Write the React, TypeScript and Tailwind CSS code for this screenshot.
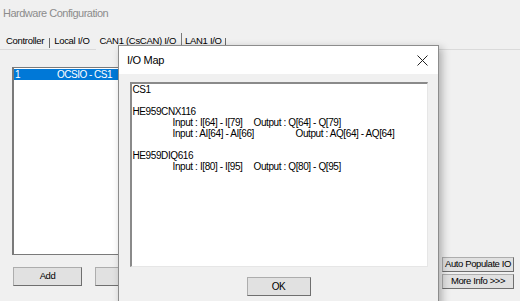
import React from 'react';

const font = { fontFamily: '"Liberation Sans", Arial, sans-serif' };

const WinButton = ({ label, className }: { label: string; className?: string }) => (
  <div
    className={`flex items-center justify-center bg-[#e1e1e1] border border-[#adadad] border-r-[#6f6f6f] border-b-[#6f6f6f] text-[9.5px] tracking-[-0.4px] text-black ${className ?? ''}`}
  >
    {label}
  </div>
);

const MapLine = ({ input, output, col }: { input: string; output: string; col: string }) => (
  <div className="pl-[40px] whitespace-pre">
    <span className={`inline-block ${col}`}>{input}</span>
    <span>{output}</span>
  </div>
);

const IoMapDialog = () => (
  <div className="absolute left-[118px] top-[45px] w-[321px] h-[270px] border border-[#8c8c8c] bg-[#f0f0f0] shadow-[3px_3px_8px_rgba(0,0,0,0.28)] flex flex-col">
    <div className="h-[28px] bg-white flex items-center justify-between pl-[8px] pr-[10px]">
      <span className="text-[11px] tracking-[-0.3px] text-black">I/O Map</span>
      <svg width="11" height="11" viewBox="0 0 11 11">
        <path d="M0.5 0.5 L10.5 10.5 M10.5 0.5 L0.5 10.5" stroke="#222" strokeWidth="1" fill="none" />
      </svg>
    </div>
    <div className="flex flex-col items-center pt-[8px]">
      <div className="w-[298px] h-[185px] bg-white border-t-2 border-l-2 border-t-[#8a8a8a] border-l-[#8a8a8a] border-r border-b border-r-[#e6e6e6] border-b-[#e6e6e6] pl-px text-[10px] leading-[11px] tracking-[-0.4px] text-black">
        <div>CS1</div>
        <div>&nbsp;</div>
        <div>HE959CNX116</div>
        <MapLine input="Input : I[64] - I[79]" output="Output : Q[64] - Q[79]" col="w-[81px]" />
        <MapLine input="Input : AI[64] - AI[66]" output="Output : AQ[64] - AQ[64]" col="w-[123px]" />
        <div>&nbsp;</div>
        <div>HE959DIQ616</div>
        <MapLine input="Input : I[80] - I[95]" output="Output : Q[80] - Q[95]" col="w-[81px]" />
      </div>
      <WinButton label="OK" className="mt-[10px] w-[64px] h-[19px] text-[10px]" />
    </div>
  </div>
);

export default function App() {
  return (
    <div style={font} className="relative w-[520px] h-[301px] overflow-hidden bg-[#f0f0f0] flex flex-col">
      <div className="h-[27px] pl-[3px] pt-[6px] text-[11px] leading-[14px] tracking-[-0.5px] text-[#8c8c8c]">
        Hardware Configuration
      </div>

      <div className="h-[22px] flex items-end pl-[6px] text-[9.5px] tracking-[-0.3px] text-black">
        <div className="h-[14px] leading-[14px] mb-[1px] pr-[5px]">Controller</div>
        <div className="w-px h-[10px] bg-[#6a6a6a] mb-[1px]" />
        <div className="h-[14px] leading-[14px] mb-[1px] pl-[4px] pr-[6px]">Local I/O</div>
        <div className="h-[17px] pt-[1px] leading-[14px] pl-[4px] pr-[5px] bg-[#f0f0f0] border-r border-[#7a7a7a] relative top-px self-end">
          CAN1 (CsCAN) I/O
        </div>
        <div className="h-[14px] leading-[14px] mb-[1px] pl-[3px] pr-[3px]">LAN1 I/O</div>
        <div className="w-px h-[10px] bg-[#6a6a6a] mb-[1px]" />
      </div>

      <div className="flex-1 border-t border-[#dadada] flex">
        <div className="flex flex-col pl-[12px] pt-[17px]">
          <div className="w-[300px] h-[188px] bg-white border border-[#7a7a7a] border-l-2 pt-px">
            <div className="h-[11px] bg-[#0078d7] text-white text-[10px] leading-[11px] tracking-[-0.5px] flex">
              <span className="w-[43px] pl-[1px]">1</span>
              <span>OCSIO - CS1</span>
            </div>
          </div>
          <div className="flex mt-[12px] pl-px gap-[13px]">
            <WinButton label="Add" className="w-[69px] h-[19px]" />
            <WinButton label="Insert" className="w-[70px] h-[19px]" />
          </div>
        </div>

        <div className="ml-auto mr-[6px] self-end mb-[12px] flex flex-col gap-[2px]">
          <WinButton label="Auto Populate IO" className="w-[72px] h-[15px]" />
          <WinButton label="More Info >>>" className="w-[72px] h-[15px]" />
        </div>
      </div>

      <IoMapDialog />
    </div>
  );
}
